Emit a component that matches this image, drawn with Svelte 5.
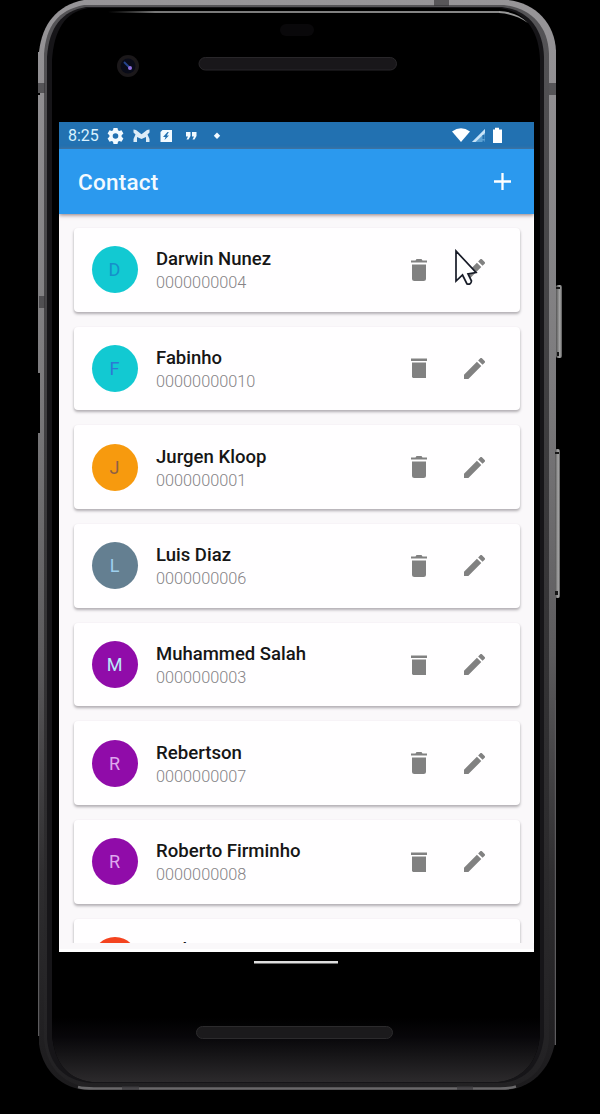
<script>
  const contacts = [
    { name: 'Darwin Nunez', phone: '0000000004', color: '#12c9d2', ink: '#168fca', w: 115 },
    { name: 'Fabinho', phone: '00000000010', color: '#12c9d2', ink: '#2d79d4', w: 66, flat: true },
    { name: 'Jurgen Kloop', phone: '0000000001', color: '#f79a0e', ink: '#8c6046', w: 110.5 },
    { name: 'Luis Diaz', phone: '0000000006', color: '#647f91', ink: '#9fd0ee', w: 75 },
    { name: 'Muhammed Salah', phone: '0000000003', color: '#900ca9', ink: '#b9eafa', w: 150, flat: true },
    { name: 'Rebertson', phone: '0000000007', color: '#900ca9', ink: '#dfa9ee', w: 86 },
    { name: 'Roberto Firminho', phone: '0000000008', color: '#900ca9', ink: '#dfa9ee', w: 144.5, flat: true },
    { name: 'Sadio', color: '#f4431f', ink: '#ffffff', w: 46, partial: true }
  ];
</script>

<main class="stage">
  <svg class="device" width="600" height="1114" viewBox="0 0 600 1114" aria-hidden="true">
    <defs>
      <linearGradient id="metal" gradientUnits="userSpaceOnUse" x1="0" y1="0" x2="0" y2="1090">
        <stop offset="0" stop-color="#979598" />
        <stop offset=".35" stop-color="#7c7b7d" />
        <stop offset=".6" stop-color="#5c5b5d" />
        <stop offset=".8" stop-color="#2f2e30" />
        <stop offset="1" stop-color="#1c1b1d" />
      </linearGradient>
      <linearGradient id="rim" x1="0" y1="0" x2="0" y2="1">
        <stop offset="0" stop-color="#555457" />
        <stop offset=".5" stop-color="#39383a" />
        <stop offset="1" stop-color="#222123" />
      </linearGradient>
      <linearGradient id="chin" x1="0" y1="0" x2="0" y2="1">
        <stop offset="0" stop-color="#000" />
        <stop offset=".3" stop-color="#08070a" />
        <stop offset=".6" stop-color="#171618" />
        <stop offset="1" stop-color="#2c2a2c" />
      </linearGradient>
      <linearGradient id="shine" x1="0" y1="0" x2="1" y2="0">
        <stop offset="0" stop-color="#555" stop-opacity="0" />
        <stop offset=".12" stop-color="#777" />
        <stop offset="1" stop-color="#888" />
      </linearGradient>
      <linearGradient id="key" x1="0" y1="0" x2="1" y2="0">
        <stop offset="0" stop-color="#555" />
        <stop offset=".65" stop-color="#aaa" />
        <stop offset="1" stop-color="#555" />
      </linearGradient>
    </defs>
    <path d="M38 52H45V373H38ZM40 432H45V1036H38V433Z" fill="url(#metal)" />
    <path d="M549 50H556V1045H549Z" fill="url(#metal)" />
    <path d="M84 0H508C536 3 555 24 556 51V1036C553 1066 534 1088 506 1090H84C56 1086 42 1066 39 1044V52C42 24 57 5 84 0Z" fill="url(#metal)" />
    <path d="M37 373H40V433H37Z" fill="#000" />
    <path d="M84 5H504C530 8 548 25 549 54V1038C547 1066 532 1084 504 1087H88C62 1084 46 1066 44 1038V54C46 26 58 10 84 5Z" fill="url(#rim)" />
    <path d="M86 7H502C527 10 543 27 544 57V1036C541 1064 527 1081 500 1083H90C63 1080 49 1064 47 1038V57C49 27 62 11 86 7Z" fill="#161518" />
    <path d="M88 8H500C523 11 539 28 540 60V1034C538 1062 523 1079 498 1082H92C67 1079 54 1062 52 1034V60C54 30 65 12 88 8Z" fill="#000" />
    <path d="M52 1018H540V1034C538 1062 523 1079 498 1082H92C67 1079 54 1062 52 1034Z" fill="url(#chin)" />
    <path d="M38 700H39.200V1036H38ZM554.800 700H556V1045H554.800Z" fill="#5c5b5d" />
    <path d="M78 1087Q84 1088.500 94 1088.500H500Q510 1088.500 516 1086.500" fill="none" stroke="#69686a" stroke-width="2.500" />
    <path d="M108 11H500V13H108Z" fill="url(#shine)" />
    <path d="M499 11Q518 12 528 23Q515 14 499 13Z" fill="#999" />
    <path d="M434 0H449V6H434ZM549 83H556V95H549ZM38 83H45V93H38ZM39 296H45V308H39ZM122 1086H139V1090H122ZM457 1086H473V1090H457Z" fill="#353437" opacity=".65" />
    <rect x="37" y="93" width="3" height="2" fill="#000" />
    <rect x="280" y="24" width="34" height="12" rx="6" fill="#09080a" />
    <rect x="199" y="57.500" width="197.500" height="12.500" rx="6.250" fill="#19171a" stroke="#29272a" />
    <circle cx="128" cy="66" r="11" fill="#1b181a" />
    <circle cx="128" cy="66" r="7.500" fill="#090b18" />
    <path d="M124 62L130 68" stroke="#24448c" stroke-width="2" />
    <circle cx="130" cy="68" r="2" fill="#9070e0" />
    <rect x="556" y="285" width="6" height="73" rx="2" fill="url(#key)" />
    <rect x="555" y="449" width="5" height="149" rx="2" fill="url(#key)" />
    <path d="M556 287H560V289H556ZM557 352H559V356H557ZM555 452H559V454H555ZM555 591H558V595H555Z" fill="#161616" />
    <rect x="254" y="961" width="84" height="2.500" fill="#dedede" />
    <rect x="196.500" y="1026.500" width="196" height="12" rx="6" fill="#1b1a1c" stroke="#2c2b2d" />
  </svg>

  <section class="screen">
    <div class="status">
      <span class="clock">8:25</span>
      <svg class="notif" width="116" height="18" viewBox="0 0 116 18" fill="#f2faff">
        <path fill-rule="evenodd" d="M6.500 1H10.500L11 3.300L12.200 4L14.500 3.200L16.400 6.500L14.600 8.200V9.800L16.400 11.500L14.500 14.800L12.200 14L11 14.700L10.500 17H6.500L6 14.700L4.800 14L2.500 14.800L.6 11.500L2.400 9.800V8.200L.6 6.500L2.500 3.200L4.800 4L6 3.300ZM8.500 6.200A2.800 2.800 0 1 0 8.500 11.800A2.800 2.800 0 1 0 8.500 6.200Z" />
        <path d="M26.500 2.500L29 3L34.500 7.300L40 3L42.500 2.500V5.500L40.500 7.500L42.500 12V15H39V10L34.500 12L30 10V15H26.500V12L28.500 7.500L26.500 5.500Z" opacity=".9" />
        <path fill-rule="evenodd" d="M55.500 3H65V15H53.500V5ZM60.500 5L56 10H58.500L57.500 13L62 8.500H59.800L61.800 5Z" />
        <path d="M79 5H83.500V9L81.500 12.500H79.500L81 9.500H79ZM85 5H89.500V9L87.500 12.500H85.500L87 9.500H85Z" />
        <path d="M110 5.500L113.200 8.800L110 12.100L106.800 8.800Z" />
      </svg>
      <svg class="signals" width="54" height="18" viewBox="0 0 54 18">
        <path d="M0 4.500Q9 -2 18 4.500L9 15Z" fill="#fff" />
        <path d="M20 15L33 2V15Z" fill="#5ca1d3" />
        <path d="M20 15L33 2V6L23.500 15Z" fill="#c8e3f7" />
        <path d="M31.500 8V12M31.500 13.500V15.500" stroke="#2271b0" stroke-width="2" />
        <path d="M43 .8H47V2.500H50V16H41V2.500H43Z" fill="#fff" />
      </svg>
    </div>

    <header class="bar">
      <h1>Contact</h1>
      <svg width="17" height="17" viewBox="0 0 17 17"><path d="M8.500 0V17M0 8.500H17" stroke="#fff" stroke-width="2.300" /></svg>
    </header>

    <div class="list">
      {#each contacts as c}
        <article class="card">
          <span class="avatar" style="background:{c.color};color:{c.ink}">{c.partial ? '' : c.name[0]}</span>
          <div class="who">
            <svg class="name" width={c.w + 4} height="24"><text x="0" y="18" textLength={c.w} lengthAdjust="spacingAndGlyphs">{c.name}</text></svg>
            <span class="phone">{c.phone ?? ''}</span>
          </div>
          <svg class="trash" width="16" height="22" viewBox="0 0 16 22" fill="#818181">
            {#if c.flat}
              <path d="M0 1.500H16V4H0ZM1 5.500H15V21H2L1 20Z" />
            {:else}
              <path d="M0 1.500H4.500L5.500 0H10.500L11.500 1.500H16V3.500H0ZM1 5.500H15V19.500Q15 22 12.500 22H3.500Q1 22 1 19.500Z" />
            {/if}
          </svg>
          <svg class="pencil" width="21" height="21" viewBox="3 3 18 18" fill="#818181"><path d="M3 17.250V21H6.750L17.810 9.940L14.060 6.190ZM20.710 7.040C21.100 6.650 21.100 6.020 20.710 5.630L18.370 3.290C17.980 2.900 17.350 2.900 16.960 3.290L15.130 5.120L18.880 8.870Z" /></svg>
        </article>
      {/each}
    </div>
  </section>

  <svg class="cursor" width="24" height="38" viewBox="0 0 24 38"><path d="M2 2V32L8.500 26L13 35Q17 36 17.500 32L14 25L22 23.500Z" fill="#fff" stroke="#171b27" stroke-width="1.700" /></svg>
</main>

<style>
  :global(body) { margin: 0; background: #000; }
  .stage { position: relative; box-sizing: border-box; width: 600px; height: 1114px; padding: 122px 66px 162px 59px; background: #000; overflow: hidden; font-family: Roboto, sans-serif; }
  .device { position: absolute; inset: 0; }
  .screen { position: relative; box-sizing: border-box; display: flex; flex-direction: column; width: 475px; height: 830px; padding-bottom: 6px; overflow: hidden; background: #faf8fa; border-bottom: 3px solid #fff; }
  .status { display: flex; flex: none; align-items: center; box-sizing: border-box; height: 27px; padding: 0 28px 0 9px; background: #2271b1; color: #d9f2ff; }
  .clock { width: 39px; font-size: 16px; line-height: 27px; }
  .notif { flex: none; }
  .signals { flex: none; margin-left: auto; }
  .bar { position: relative; z-index: 1; display: flex; flex: none; align-items: center; justify-content: space-between; box-sizing: border-box; height: 65px; padding: 0 23px 0 19px; background: #2b99ee; box-shadow: 0 1px 4px #8f7777; }
  h1 { margin: 0; color: #f2faff; font-size: 22.500px; font-weight: 500; line-height: 30px; letter-spacing: .25px; }
  .list { display: flex; flex: 1; flex-direction: column; gap: 15.200px; min-height: 0; overflow: hidden; padding: 14px 14px 0; border-right: 1px solid #fff; }
  .card { display: flex; flex: none; align-items: center; box-sizing: border-box; width: 446px; height: 83.500px; margin-left: 1px; padding: 0 35px 0 17.500px; border-radius: 4px; background: #fffeff; box-shadow: 0 2px 3px #b4b1b5, 0 1px 2px #dedbdd; }
  .avatar { display: grid; flex: none; width: 46px; height: 47px; margin-right: 18.500px; border-radius: 50%; place-items: center; font-size: 18px; }
  .who { display: flex; flex: 1; flex-direction: column; padding-top: 3px; }
  .name { display: block; overflow: visible; fill: #161616; font-size: 19px; font-weight: 500; }
  .phone { height: 24px; color: #858386; font-size: 16.300px; font-weight: 300; line-height: 24px; }
  .trash { margin-right: 37px; }
  .cursor { position: absolute; left: 454px; top: 249px; }
</style>
